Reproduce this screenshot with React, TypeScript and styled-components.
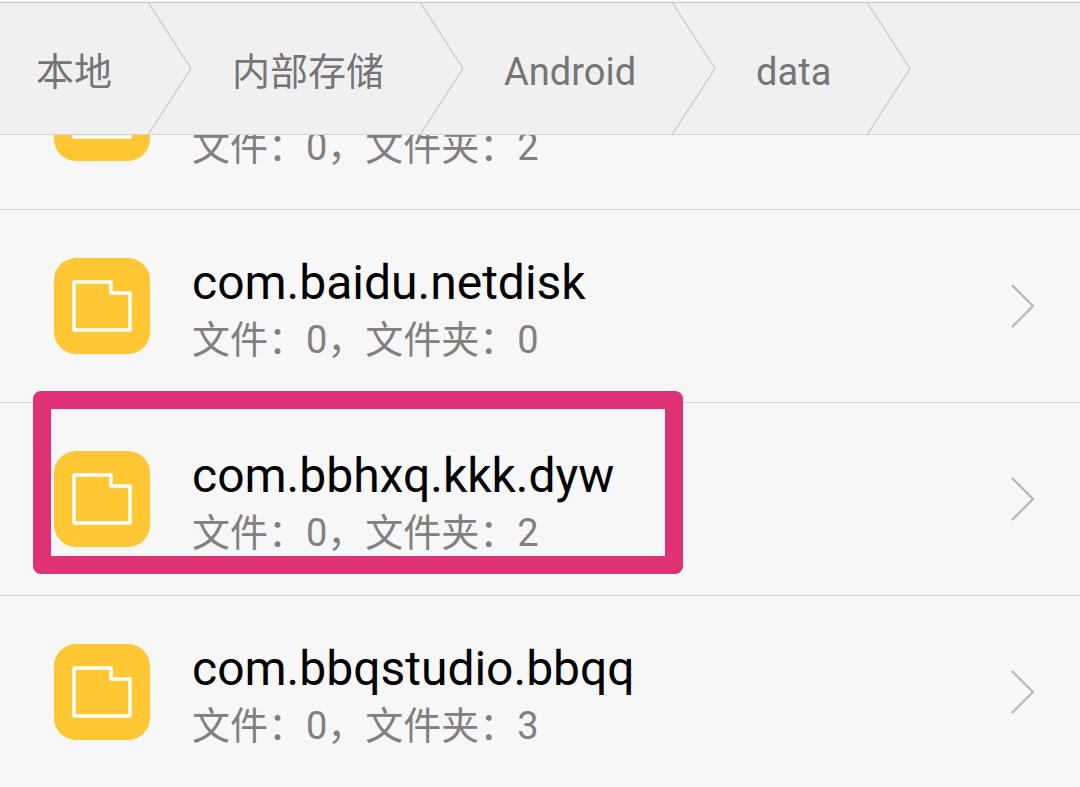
import styled, { createGlobalStyle } from "styled-components";

const GlobalStyle = createGlobalStyle`
  html, body {
    margin: 0;
    padding: 0;
    background: #f7f7f7;
  }
`;

const crumbs = ["本地", "内部存储", "Android", "data"];

const folders = [
  { name: "com.baidu.browser", detail: "文件：0，文件夹：2" },
  { name: "com.baidu.netdisk", detail: "文件：0，文件夹：0" },
  { name: "com.bbhxq.kkk.dyw", detail: "文件：0，文件夹：2" },
  { name: "com.bbqstudio.bbqq", detail: "文件：0，文件夹：3" },
];

const App = () => {
  return (
    <Page>
      <GlobalStyle />
      <Header>
        {crumbs.map((crumb, i) => (
          <Crumb key={crumb} $first={i === 0}>
            {crumb}
            <CrumbArrow viewBox="0 0 44 131" aria-hidden="true">
              <path d="M0.5 0 L43 65.5 L0.5 131" />
            </CrumbArrow>
          </Crumb>
        ))}
      </Header>
      <List>
        <Rows>
          {folders.map((folder) => (
            <Row key={folder.name}>
              <FolderIcon>
                <svg width="60" height="52" viewBox="0 0 60 52" aria-hidden="true">
                  <path d="M2 2 H39 V13 H58 V50 H2 Z" />
                </svg>
              </FolderIcon>
              <Info>
                <Name>{folder.name}</Name>
                <Detail>{folder.detail}</Detail>
              </Info>
              <RowArrow viewBox="0 0 23 44" aria-hidden="true">
                <path d="M1 1 L22 22 L1 43" />
              </RowArrow>
            </Row>
          ))}
        </Rows>
      </List>
      <Highlight />
    </Page>
  );
};

const Page = styled.div`
  position: relative;
  width: 1080px;
  height: 787px;
  overflow: hidden;
  background: #f7f7f7;
  font-family: Roboto, "Noto Sans CJK SC", sans-serif;
`;

const Header = styled.div`
  position: relative;
  z-index: 1;
  display: flex;
  margin-top: 2px;
  height: 131px;
  background: #f0f0f0;
  border-top: 1px solid #c4c4c4;
  border-bottom: 1px solid #d2d2d2;
`;

const Crumb = styled.div<{ $first?: boolean }>`
  position: relative;
  box-sizing: border-box;
  height: 131px;
  padding: 47px 36px 0 ${(p) => (p.$first ? "36px" : "84px")};
  font-size: 38px;
  line-height: 44px;
  color: #757575;
  white-space: nowrap;
`;

const CrumbArrow = styled.svg`
  position: absolute;
  top: 0;
  left: 100%;
  width: 44px;
  height: 131px;
  fill: none;
  stroke: #c8c8c8;
  stroke-width: 1.2;
`;

const List = styled.div`
  height: 652px;
  overflow: hidden;
`;

const Rows = styled.div`
  margin-top: -118px;
`;

const Row = styled.div`
  display: flex;
  align-items: center;
  box-sizing: border-box;
  height: 193px;
  padding: 0 46px 0 54px;
  border-bottom: 1px solid #d2d2d2;
`;

const FolderIcon = styled.div`
  display: flex;
  align-items: center;
  justify-content: center;
  flex: none;
  width: 96px;
  height: 96px;
  border-radius: 22px;
  background: #ffc733;

  path {
    fill: none;
    stroke: #fff;
    stroke-width: 3.5;
    stroke-linejoin: round;
  }
`;

const Info = styled.div`
  flex: 1;
  margin-left: 42px;
  padding-top: 5px;
`;

const Name = styled.div`
  font-size: 48px;
  line-height: 54px;
  color: #000;
`;

const Detail = styled.div`
  font-size: 38px;
  line-height: 44px;
  margin-top: 8px;
  color: #808080;
`;

const RowArrow = styled.svg`
  flex: none;
  width: 23px;
  height: 44px;
  fill: none;
  stroke: #b5b5b5;
  stroke-width: 2;
`;

const Highlight = styled.div`
  position: absolute;
  z-index: 2;
  top: 391px;
  left: 33px;
  box-sizing: border-box;
  width: 650px;
  height: 183px;
  border: 18px solid #de3274;
  border-radius: 8px;
`;

export default App;
